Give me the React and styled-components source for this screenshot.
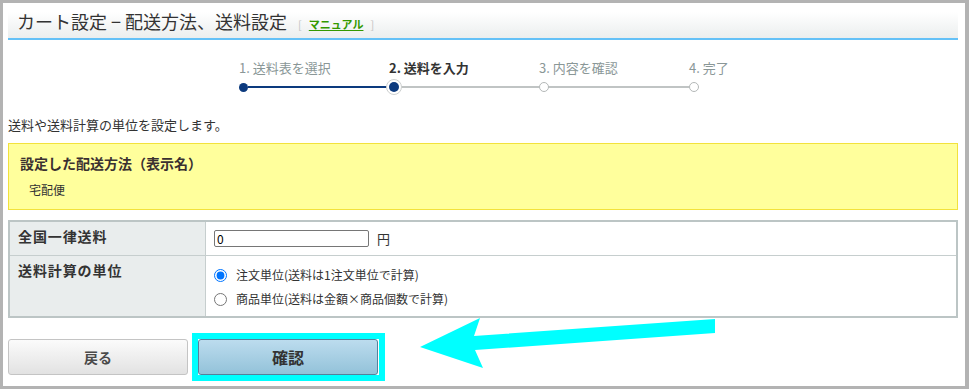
import React from "react";
import styled, { createGlobalStyle } from "styled-components";

const GlobalStyle = createGlobalStyle`
  body {
    margin: 0;
    font-family: "Noto Sans CJK JP", "Noto Sans", sans-serif;
    color: #333;
    background: #fff;
  }
`;

const Frame = styled.div`
  position: relative;
  box-sizing: border-box;
  width: 969px;
  height: 389px;
  border: 3px solid #b3b3b3;
  border-right-width: 4px;
  padding: 9px 0 0 5px;
  background: #fff;
`;

const Content = styled.div`
  width: 950px;
`;

const Header = styled.div`
  display: flex;
  align-items: baseline;
  box-sizing: border-box;
  height: 28px;
  padding-left: 9px;
  border-bottom: 2px solid #64c1f7;
  background: linear-gradient(#ffffff, #ebeeee);
`;

const Title = styled.h1`
  margin: 0;
  font-size: 18px;
  font-weight: normal;
  line-height: 19px;
  color: #333;
`;

const Manual = styled.span`
  margin-left: 11px;
  font-size: 11px;
  color: #c4c4c4;

  a {
    margin: 0 7px;
    color: #339900;
    font-weight: bold;
    text-decoration: underline;
  }
`;

const Steps = styled.div`
  display: flex;
  margin-top: 19px;
  padding-left: 231px;
`;

const Step = styled.div`
  width: ${(p) => (p.$last ? "auto" : "150px")};
  flex: none;
`;

const StepLabel = styled.div`
  font-size: 13px;
  line-height: 18px;
  white-space: nowrap;
  color: ${(p) => (p.$active ? "#333" : "#8a9797")};
  font-weight: ${(p) => (p.$active ? "bold" : "normal")};
`;

const Track = styled.div`
  display: flex;
  align-items: center;
  height: 16px;
  margin-top: 2px;
`;

const DotSlot = styled.div`
  display: flex;
  align-items: center;
  justify-content: center;
  width: 9px;
  flex: none;
`;

const Dot = styled.span`
  position: relative;
  z-index: 1;
  flex: none;
  box-sizing: border-box;
  border-radius: 50%;
  ${(p) =>
    p.$state === "done" &&
    `width: 9px; height: 9px; background: #0c3a7e;`}
  ${(p) =>
    p.$state === "todo" &&
    `width: 10px; height: 10px; background: #fff; border: 1px solid #b4b8b8;`}
  ${(p) =>
    p.$state === "current" &&
    `width: 16px; height: 16px; background: #fff; border: 1px solid #cdd0d0;
     display: flex; align-items: center; justify-content: center;
     &::after { content: ""; width: 10px; height: 10px; border-radius: 50%; background: #0c3a7e; }`}
`;

const Line = styled.div`
  flex: 1;
  height: 2px;
  background: ${(p) => (p.$done ? "#0c3a7e" : "#c0c4c4")};
`;

const Lead = styled.p`
  margin: 21px 0 0;
  font-size: 13px;
  line-height: 18px;
`;

const Notice = styled.div`
  margin-top: 9px;
  padding: 9px 11px 10px;
  border: 1px solid #f2e23c;
  background: #ffff9c;
`;

const NoticeTitle = styled.div`
  font-size: 14px;
  font-weight: bold;
  line-height: 20px;
  color: #3a3030;
`;

const NoticeText = styled.div`
  margin-top: 8px;
  padding-left: 9px;
  font-size: 12px;
  line-height: 18px;
`;

const Table = styled.div`
  display: grid;
  grid-template-columns: 196px 1fr;
  margin-top: 10px;
  border: 2px solid #bcc5c5;
`;

const HeadCell = styled.div`
  box-sizing: border-box;
  height: ${(p) => p.$h}px;
  padding: 4px 8px;
  background: #e9eded;
  border-right: 1px solid #c6cece;
  border-bottom: ${(p) => (p.$divider ? "1px solid #c6cece" : "none")};
  font-size: 14px;
  font-weight: bold;
  letter-spacing: 0.9px;
  line-height: 20px;
  color: #333;
`;

const DataCell = styled.div`
  box-sizing: border-box;
  height: ${(p) => p.$h}px;
  border-bottom: ${(p) => (p.$divider ? "1px solid #c6cece" : "none")};
  padding: ${(p) => (p.$stack ? "7px 8px 0" : "0 8px")};
  display: flex;
  flex-direction: ${(p) => (p.$stack ? "column" : "row")};
  align-items: ${(p) => (p.$stack ? "flex-start" : "center")};
  font-size: 12px;
`;

const TextInput = styled.input`
  box-sizing: border-box;
  width: 155px;
  height: 17px;
  margin: 0 8px 0 0;
  padding: 0 2px;
  border: 1px solid #767676;
  border-radius: 2px;
  font-family: inherit;
  font-size: 12px;
  color: #000;
`;

const Unit = styled.span`
  font-size: 13px;
`;

const RadioRow = styled.label`
  display: flex;
  align-items: center;
  height: 24px;
  line-height: 24px;
  font-size: 12px;
  color: #333;

  input {
    width: 13px;
    height: 13px;
    margin: 0 9px 0 0;
  }
`;

const Buttons = styled.div`
  display: flex;
  gap: 10px;
  margin-top: 21px;
`;

const Button = styled.button`
  position: relative;
  box-sizing: border-box;
  width: 180px;
  height: 36px;
  border-radius: 3px;
  font-family: inherit;
  font-weight: bold;
  cursor: pointer;
  font-size: ${(p) => (p.$primary ? "16px" : "14px")};
  color: ${(p) => (p.$primary ? "#333" : "#4a4a4a")};
  border: 1px solid ${(p) => (p.$primary ? "#56809c" : "#c4c4c4")};
  background: ${(p) =>
    p.$primary
      ? "linear-gradient(#bcdcee, #93c2d9)"
      : "linear-gradient(#fbfbfb, #e2e2e2)"};

  ${(p) =>
    p.$highlight &&
    `&::after {
      content: "";
      position: absolute;
      inset: -7px -8px -7px -7px;
      border: 6px solid #00ffff;
      pointer-events: none;
    }`}
`;

const Arrow = styled.svg`
  position: absolute;
  left: 415px;
  top: 313px;
`;

const steps = [
  { label: "1. 送料表を選択", state: "done" },
  { label: "2. 送料を入力", state: "current" },
  { label: "3. 内容を確認", state: "todo" },
  { label: "4. 完了", state: "todo" },
];

export default function App() {
  return (
    <>
      <GlobalStyle />
      <Frame>
        <Content>
          <Header>
            <Title>カート設定 − 配送方法、送料設定</Title>
            <Manual>
              [<a href="#manual">マニュアル</a>]
            </Manual>
          </Header>

          <Steps>
            {steps.map((s, i) => {
              const last = i === steps.length - 1;
              return (
                <Step key={s.label} $last={last}>
                  <StepLabel $active={s.state === "current"}>{s.label}</StepLabel>
                  <Track>
                    <DotSlot>
                      <Dot $state={s.state} />
                    </DotSlot>
                    {!last && <Line $done={s.state === "done"} />}
                  </Track>
                </Step>
              );
            })}
          </Steps>

          <Lead>送料や送料計算の単位を設定します。</Lead>

          <Notice>
            <NoticeTitle>設定した配送方法（表示名）</NoticeTitle>
            <NoticeText>宅配便</NoticeText>
          </Notice>

          <Table>
            <HeadCell $h={34} $divider>
              全国一律送料
            </HeadCell>
            <DataCell $h={34} $divider>
              <TextInput type="text" defaultValue="0" />
              <Unit>円</Unit>
            </DataCell>
            <HeadCell $h={60}>送料計算の単位</HeadCell>
            <DataCell $h={60} $stack>
              <RadioRow>
                <input type="radio" name="unit" defaultChecked />
                注文単位(送料は1注文単位で計算)
              </RadioRow>
              <RadioRow>
                <input type="radio" name="unit" />
                商品単位(送料は金額×商品個数で計算)
              </RadioRow>
            </DataCell>
          </Table>

          <Buttons>
            <Button>戻る</Button>
            <Button $primary $highlight>
              確認
            </Button>
          </Buttons>
        </Content>

        <Arrow width="300" height="54" viewBox="0 0 300 54">
          <polygon
            points="2,31 62,2 56,20 297,3 297,17 57,34 65,52"
            fill="#00ffff"
          />
        </Arrow>
      </Frame>
    </>
  );
}
